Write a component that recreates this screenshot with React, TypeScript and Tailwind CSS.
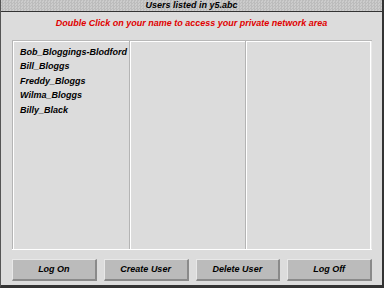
import React from "react";

const font = { fontFamily: '"Liberation Sans", Arial, sans-serif' };

function Btn({ label }: { label: string }) {
  return (
    <div className="flex-1 h-[22px] flex items-center justify-center bg-[#bbbbbb] border-t border-l border-t-[#e8e8e8] border-l-[#e8e8e8] border-b-2 border-r-2 border-b-[#8a8a8a] border-r-[#8a8a8a] text-[9px] font-bold italic text-black">
      {label}
    </div>
  );
}

export default function App() {
  const users = ["Bob_Bloggings-Blodford", "Bill_Bloggs", "Freddy_Bloggs", "Wilma_Bloggs", "Billy_Black"];
  return (
    <div style={font} className="w-[384px] h-[288px] bg-[#dcdcdc] flex flex-col border-l border-l-[#555] border-r-2 border-r-[#333] border-b-[3px] border-b-[#333]">
      <div className="h-[12px] bg-[#c4c4c4] bg-[repeating-conic-gradient(#bcbcbc_0_25%,#cccccc_0_50%)] bg-[length:3px_3px] border-b border-b-[#333] flex items-center justify-center text-[9px] leading-none font-bold italic text-black">
        Users listed in y5.abc
      </div>
      <div className="h-[16px] mt-[4px] flex items-center justify-center text-[9px] font-bold italic text-[#e00000]">
        Double Click on your name to access your private network area
      </div>
      <div className="ml-[11px] mr-[10px] mt-[8px] h-[210px] flex border-t border-t-[#b8b8b8] border-b border-b-white">
        <div className="w-[118px] border-l border-l-[#b4b4b4] border-r border-r-[#b4b4b4]">
          <div className="h-full border-l border-l-white border-t border-t-white pl-[6px] pt-[3px] flex flex-col">
            {users.map((u) => (
              <div key={u} className="h-[14.5px] flex items-center text-[9px] font-bold italic text-black leading-none">
                {u}
              </div>
            ))}
          </div>
        </div>
        <div className="w-[116px] border-r border-r-[#b4b4b4]">
          <div className="h-full border-l border-l-white border-t border-t-white" />
        </div>
        <div className="flex-1 border-r border-r-[#e8e8e8]">
          <div className="h-full border-l border-l-white border-t border-t-white border-r border-r-white" />
        </div>
      </div>
      <div className="ml-[11px] mr-[10px] mt-[9px] flex gap-[7px]">
        <Btn label="Log On" />
        <Btn label="Create User" />
        <Btn label="Delete User" />
        <Btn label="Log Off" />
      </div>
    </div>
  );
}
